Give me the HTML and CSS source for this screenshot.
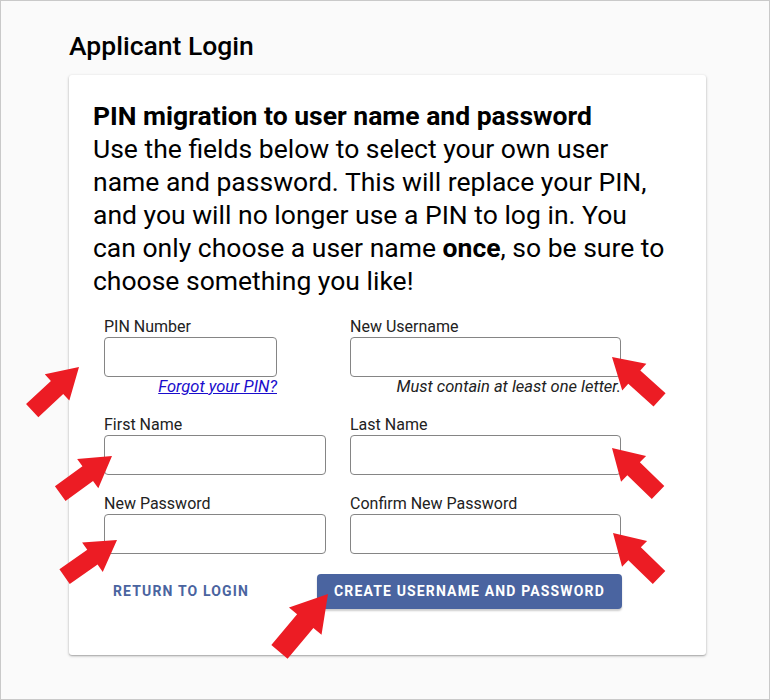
FILE: index.html
```html
<!DOCTYPE html>
<html>

<head>
	<meta charset="UTF-8">
	<title>Applicant Login</title>
	<link rel="stylesheet" href="styles.css">
</head>

<body>
	<div id="page">
		<div id="wrap">
			<h1 class="pageTitle">Applicant Login</h1>
			<div class="card">
				<h2 class="cardTitle">PIN migration to user name and password</h2>
				<p class="intro">Use the fields below to select your own user name and password. This will replace your PIN,
					and you will no longer use a PIN to log in. You can only choose a user name <b>once</b>, so be sure to
					choose something you like!</p>

				<form class="grid">
					<div class="field">
						<label for="pin">PIN Number</label>
						<input id="pin" class="short" type="text">
						<a class="hint link short" href="javascript:;">Forgot your PIN?</a>
					</div>
					<div class="field">
						<label for="user">New Username</label>
						<input id="user" type="text">
						<span class="hint">Must contain at least one letter.</span>
					</div>
					<div class="field">
						<label for="first">First Name</label>
						<input id="first" type="text">
					</div>
					<div class="field">
						<label for="last">Last Name</label>
						<input id="last" type="text">
					</div>
					<div class="field">
						<label for="pw">New Password</label>
						<input id="pw" type="password">
					</div>
					<div class="field">
						<label for="pw2">Confirm New Password</label>
						<input id="pw2" type="password">
					</div>
				</form>

				<div class="actions">
					<a class="btnText" href="javascript:;">Return to login</a>
					<a class="btnMain" href="javascript:;">Create username and password</a>
				</div>
			</div>
		</div>

		<!-- red pointers laid over the form -->
		<svg class="marks" width="770" height="700" viewBox="0 0 770 700">
			<defs>
				<polygon id="arrow" points="0,0 -30,-18 -30,-9 -64,-9 -64,9 -30,9 -30,18" />
			</defs>
			<g fill="#ec1c24">
				<use href="#arrow" transform="translate(79 367) rotate(-43)" />
				<use href="#arrow" transform="translate(612 357) rotate(-138)" />
				<use href="#arrow" transform="translate(112 456) rotate(-36)" />
				<use href="#arrow" transform="translate(612 448) rotate(-136)" />
				<use href="#arrow" transform="translate(117 540) rotate(-35)" />
				<use href="#arrow" transform="translate(613 533) rotate(-136)" />
				<use href="#arrow" transform="translate(328 594) rotate(-50) scale(1.18)" />
			</g>
		</svg>
	</div>
</body>

</html>
```

FILE: styles.css
```css
html,
body {
	margin: 0;
	padding: 0;
}

body {
	font-family: Roboto, "Liberation Sans", sans-serif;
	color: #111;
	background: #fafafa;
}

#page {
	width: 770px;
	height: 700px;
	box-sizing: border-box;
	border: 1px solid #c9c9c9;
	position: relative;
	overflow: hidden;
}

#wrap {
	width: 637px;
	margin-left: 68px;
	padding-top: 29px;
}

.pageTitle {
	margin: 0 0 13px;
	font-size: 26.5px;
	line-height: 32px;
	font-weight: 500;
	color: #000;
}

.card {
	background: #fff;
	border-radius: 3px;
	box-shadow: 0 1px 3px rgba(0, 0, 0, 0.28), 0 1px 1px rgba(0, 0, 0, 0.12);
	padding: 24px 24px 46px;
}

.cardTitle {
	margin: 0;
	font-size: 26.5px;
	line-height: 33px;
	font-weight: 700;
	color: #000;
}

.intro {
	margin: 0;
	max-width: 582px;
	font-size: 26.5px;
	line-height: 33px;
	color: #000;
}

.intro b {
	font-weight: 700;
}

.grid {
	display: grid;
	grid-template-columns: 222px 271px;
	column-gap: 24px;
	row-gap: 20px;
	margin: 21px 0 0 11px;
}

.field {
	display: flex;
	flex-direction: column;
}

.field label {
	font-size: 16px;
	line-height: 18px;
	color: #222;
	margin-bottom: 1px;
}

.field input {
	height: 40px;
	box-sizing: border-box;
	border: 1px solid #858585;
	border-radius: 4px;
	background: #fff;
	font: 16px Roboto, sans-serif;
	padding: 0 10px;
	margin: 0;
}

.field .short {
	width: 173px;
}

.hint {
	font-size: 16.5px;
	line-height: 18px;
	font-style: italic;
	color: #222;
	text-align: right;
	margin-top: 1px;
}

.hint.link {
	color: #1a0dcc;
	text-decoration: underline;
}

.actions {
	display: flex;
	align-items: center;
	margin: 20px 0 0 11px;
}

.btnText,
.btnMain {
	text-decoration: none;
	text-transform: uppercase;
	font-size: 14px;
	font-weight: 700;
	letter-spacing: 1.15px;
	height: 35px;
	line-height: 35px;
	box-sizing: border-box;
}

.btnText {
	color: #4a64a0;
	padding: 0 9px;
	width: 213px;
}

.btnMain {
	background: #4a64a0;
	color: #fff;
	border-radius: 4px;
	padding: 0 17px;
	box-shadow: 0 2px 2px rgba(0, 0, 0, 0.2);
}

.marks {
	position: absolute;
	left: -1px;
	top: -1px;
	pointer-events: none;
}
```
